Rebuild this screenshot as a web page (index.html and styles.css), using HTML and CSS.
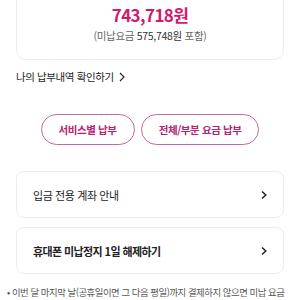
FILE: index.html
```html
<!DOCTYPE html>
<html lang="ko">
<head>
<meta charset="utf-8">
<link rel="stylesheet" href="styles.css">
</head>
<body>
<div class="page">
  <section class="summary">
    <div class="amount">743,718원</div>
    <div class="sub">(미납요금 <span class="num">575,748원</span> 포함)</div>
  </section>

  <a class="history">나의 납부내역 확인하기
    <svg class="hist-chev" width="6" height="10" viewBox="0 0 6 10"><polyline points="1,1 5,5 1,9" fill="none" stroke="#222" stroke-width="1.1"/></svg>
  </a>

  <div class="buttons">
    <button class="pill">서비스별 납부</button>
    <button class="pill">전체/부분 요금 납부</button>
  </div>

  <a class="row">
    <span>입금 전용 계좌 안내</span>
    <svg width="6" height="10" viewBox="0 0 6 10"><polyline points="1,1.5 4.8,5 1,8.5" fill="none" stroke="#222" stroke-width="1.5"/></svg>
  </a>
  <a class="row bold">
    <span>휴대폰 미납정지 1일 해제하기</span>
    <svg width="6" height="10" viewBox="0 0 6 10"><polyline points="1,1.5 4.8,5 1,8.5" fill="none" stroke="#222" stroke-width="1.5"/></svg>
  </a>

  <p class="note">• 이번 달 마지막 날(공휴일이면 그 다음 평일)까지 결제하지 않으면 미납 요금</p>
</div>
</body>
</html>
```

FILE: styles.css
```css
html, body {
  margin: 0;
  padding: 0;
  background: #fff;
  overflow: hidden;
}
body {
  font-family: "Noto Sans CJK KR", "Noto Sans", sans-serif;
  color: #222;
}
.page {
  padding: 0 16px;
}
.summary {
  margin-top: -13px;
  border: 1px solid #ececec;
  border-radius: 10px;
  padding: 16px 0 15px;
  text-align: center;
}
.amount {
  font-size: 17px;
  line-height: 22px;
  font-weight: 700;
  color: #d4186e;
  letter-spacing: -0.6px;
}
.sub {
  margin-top: 2px;
  font-size: 10.5px;
  line-height: 16px;
  color: #666;
  letter-spacing: -0.3px;
}
.sub .num {
  color: #333;
}
.history {
  display: flex;
  align-items: center;
  gap: 5px;
  margin-top: 9px;
  font-size: 10.5px;
  line-height: 16px;
  letter-spacing: -0.4px;
  color: #222;
}
.buttons {
  display: flex;
  justify-content: center;
  gap: 6px;
  margin-top: 29px;
}
.pill {
  font-family: inherit;
  background: #fff;
  border: 1px solid #c46b9e;
  border-radius: 16px;
  height: 31px;
  padding: 0 17px;
  font-size: 10.5px;
  font-weight: 700;
  color: #b52270;
  letter-spacing: -0.4px;
}
.row {
  display: flex;
  align-items: center;
  justify-content: space-between;
  border: 1px solid #ececec;
  border-radius: 8px;
  height: 45px;
  padding: 0 16px;
  margin-top: 26px;
  font-size: 11px;
  letter-spacing: -0.4px;
  color: #222;
}
.row + .row {
  margin-top: 9px;
}
.row.bold {
  font-weight: 700;
  letter-spacing: -0.6px;
}
.note {
  margin: 12px 0 0 -9px;
  font-size: 9.4px;
  line-height: 12px;
  color: #555;
  letter-spacing: -0.45px;
  white-space: nowrap;
}
```
